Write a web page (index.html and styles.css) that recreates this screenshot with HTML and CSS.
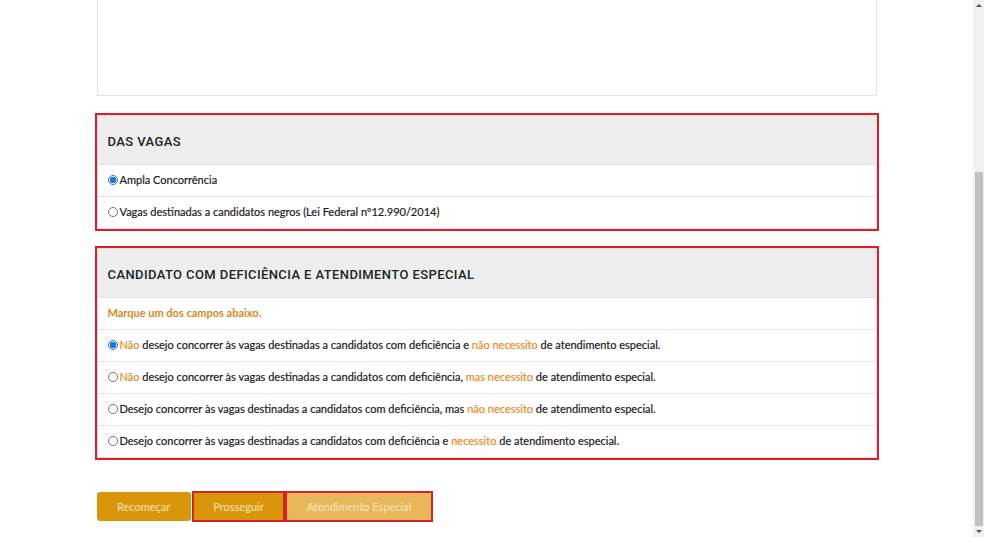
FILE: index.html
```html
<!DOCTYPE html>
<html lang="pt-BR">

<head>
    <meta charset="UTF-8">
    <meta name="viewport" content="width=device-width, initial-scale=1.0">
    <title>Inscrição</title>
    <link rel="stylesheet" href="styles.css">
</head>

<body>
    <div class="window">
        <main class="page">
            <div class="container">
                <div class="text-box"></div>

                <section class="panel marked">
                    <h2 class="panel-title">DAS VAGAS</h2>
                    <label class="row"><input type="radio" name="vaga" checked><span>Ampla Concorrência</span></label>
                    <label class="row"><input type="radio" name="vaga"><span>Vagas destinadas a candidatos negros (Lei Federal nº12.990/2014)</span></label>
                </section>

                <section class="panel marked">
                    <h2 class="panel-title">CANDIDATO COM DEFICIÊNCIA E ATENDIMENTO ESPECIAL</h2>
                    <p class="row hint">Marque um dos campos abaixo.</p>
                    <label class="row"><input type="radio" name="pcd" checked><span><em>Não</em> desejo concorrer às vagas destinadas a candidatos com deficiência e <em>não necessito</em> de atendimento especial.</span></label>
                    <label class="row"><input type="radio" name="pcd"><span><em>Não</em> desejo concorrer às vagas destinadas a candidatos com deficiência, <em>mas necessito</em> de atendimento especial.</span></label>
                    <label class="row"><input type="radio" name="pcd"><span>Desejo concorrer às vagas destinadas a candidatos com deficiência, mas <em>não necessito</em> de atendimento especial.</span></label>
                    <label class="row"><input type="radio" name="pcd"><span>Desejo concorrer às vagas destinadas a candidatos com deficiência e <em>necessito</em> de atendimento especial.</span></label>
                </section>

                <div class="actions">
                    <button class="btn">Recomeçar</button>
                    <button class="btn marked">Prosseguir</button>
                    <button class="btn btn-light marked">Atendimento Especial</button>
                </div>
            </div>
        </main>

        <!-- barra de rolagem desenhada -->
        <div class="scrollbar">
            <span class="arrow up"></span>
            <span class="thumb"></span>
            <span class="arrow down"></span>
        </div>
    </div>
</body>

</html>
```

FILE: styles.css
```css
html,
body {
    margin: 0;
    height: 100%;
    overflow: hidden;
    background: #fff;
}

body {
    font-family: Lato, "Liberation Sans", Arial, sans-serif;
    font-size: 11px;
    color: #1c1c1c;
}

.window {
    display: flex;
    height: 537px;
}

.page {
    flex: 1;
    overflow: hidden;
}

.container {
    width: 780px;
    margin: 0 auto;
}

/* caixa de texto (cortada pela rolagem) */
.text-box {
    height: 95px;
    border: 1px solid #e2e2e2;
    border-top: none;
    margin-bottom: 19px;
}

.panel {
    border: 1px solid #dedede;
    margin-bottom: 19px;
}

/* destaque vermelho */
.marked {
    outline: 2px solid #d6202c;
    outline-offset: 0;
}

.panel-title {
    margin: 0;
    height: 48px;
    line-height: 52px;
    padding: 0 10px;
    background: #eeeeee;
    border-bottom: 1px solid #e3e3e3;
    font-family: Roboto, "Open Sans", sans-serif;
    font-weight: 500;
    font-size: 13px;
    letter-spacing: 0.4px;
    color: #222;
}

.row {
    display: flex;
    align-items: center;
    height: 29px;
    margin: 0;
    padding: 0 10px 2px;
    border-bottom: 1px solid #e5e5e5;
    -webkit-text-stroke: 0.2px #1c1c1c;
}

.row:last-child {
    border-bottom: none;
}

.row em {
    font-style: normal;
    color: #ee8a27;
    -webkit-text-stroke-color: #ee8a27;
}

.hint {
    color: #d7891a;
    font-weight: 700;
    -webkit-text-stroke: 0;
}

.row input {
    appearance: none;
    flex: none;
    width: 10px;
    height: 10px;
    margin: 0 2px 0 0;
    border: 1px solid #767676;
    border-radius: 50%;
    background: #fff;
}

.row input:checked {
    border-color: #1a73e8;
    background: radial-gradient(circle, #1a73e8 0 3px, #fff 3.5px);
}

.actions {
    display: flex;
    gap: 2px;
    margin-top: 34px;
}

.btn {
    height: 29px;
    padding: 0 20.5px;
    border: none;
    border-radius: 3px;
    background: #d9960a;
    color: #fbe5bd;
    font-family: Lato, "Liberation Sans", Arial, sans-serif;
    font-size: 11px;
}

.btn.marked {
    border-radius: 0;
    outline-offset: -1px;
}

.btn-light {
    background: #e7b75a;
}

.scrollbar {
    width: 11px;
    background: #f1f1f1;
    display: flex;
    flex-direction: column;
    align-items: center;
}

.arrow {
    width: 0;
    height: 0;
    margin: 4px 0;
    border-left: 3px solid transparent;
    border-right: 3px solid transparent;
}

.arrow.up {
    border-bottom: 3px solid #505050;
}

.arrow.down {
    border-top: 3px solid #505050;
}

.thumb {
    width: 8px;
    margin-top: 161px;
    flex: 1;
    background: #c1c1c1;
}
```
